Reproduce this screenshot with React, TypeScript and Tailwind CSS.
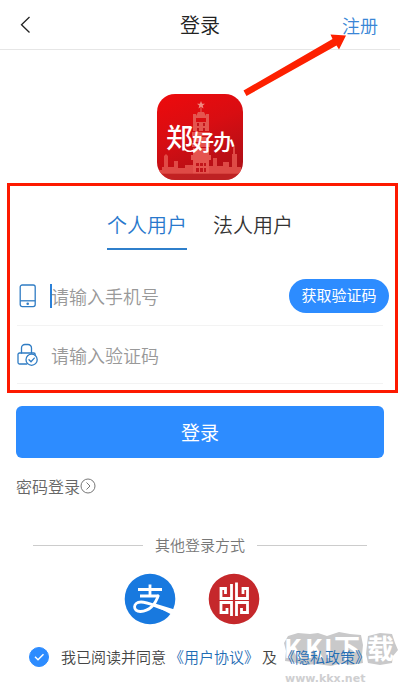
import { useState } from "react"

// ─── Data ─────────────────────────────────────────────────────────────────────

type TabKey = "personal" | "corporate"

const TABS: { key: TabKey; label: string }[] = [
  { key: "personal", label: "个人用户" },
  { key: "corporate", label: "法人用户" },
]

// ─── Icons and logos ──────────────────────────────────────────────────────────

function BackIcon() {
  return (
    <svg className="h-5 w-5" viewBox="0 0 20 20" fill="none" stroke="#222" strokeWidth="1.3">
      <path d="M15.500 2 7.500 9.700 15.500 17.500" />
    </svg>
  )
}

function PhoneIcon() {
  return (
    <svg className="h-6 w-5" viewBox="0 0 20 24" fill="none" stroke="#2f7cc4" strokeWidth="1.300">
      <rect x="3.200" y="1" width="15" height="21.600" rx="2" />
      <path d="M3.200 16.800h15" />
      <circle cx="10.700" cy="19.700" r="1.300" fill="#2f7cc4" stroke="none" />
    </svg>
  )
}

function LockIcon() {
  return (
    <svg className="h-6 w-[22px]" viewBox="0 0 22 24" fill="none" stroke="#2f7cc4" strokeWidth="1.300" strokeLinecap="round">
      <path d="M4.500 10V5a3.500 3.500 0 0 1 3.500-3.500h3A3.500 3.500 0 0 1 14.500 5V10" />
      <path d="M18.200 11.800v-.3a1.500 1.500 0 0 0-1.500-1.500H2.500A1.500 1.500 0 0 0 1 11.500v8A1.500 1.500 0 0 0 2.500 21h7.200" />
      <circle cx="14.600" cy="16.700" r="5.600" />
      <path d="m12 16.700 2 2 3.300-3.600" />
    </svg>
  )
}

function AppLogo() {
  return (
    <svg className="h-[86px] w-[86px]" viewBox="0 0 86 86" role="img" aria-label="郑好办">
      <defs>
        <linearGradient id="logo-bg" x1="0" y1="0" x2="0.400" y2="1">
          <stop offset="0" stopColor="#ee0a0c" />
          <stop offset="0.500" stopColor="#d80d12" />
          <stop offset="1" stopColor="#b30f16" />
        </linearGradient>
        <clipPath id="logo-clip">
          <rect width="86" height="86" rx="18" />
        </clipPath>
      </defs>
      <g clipPath="url(#logo-clip)">
        <rect width="86" height="86" fill="url(#logo-bg)" />
        <g fill="#e5554f">
          <path d="m44 7 1.100 2.700h2.900l-2.300 1.800.8 2.900-2.500-1.700-2.500 1.700.8-2.900L40 9.700h2.900z" fill="#f08a80" />
          <path d="M43.400 13h1.200v5h-1.200zM41 18h6l3 6H38z" />
          <path d="M36 20h3v8h10v-8h3v14H36zM36 33h16v4H36zM35 38h18v4H35zM36 43h16v5H36zM35 49h18v4H35zM36 54h16v7H36zM34 61h20v5H34zM36 66h16v14H36z" />
          <path d="M2 76h3v-3h2V62l2-2 2 2v11h6v-6h4v7h7v-3h8v9H2zM52 72h4v-8h4v8h6v-4h6v5h3V60h1v-6l1-3 1 3v6h2v13h4v7H52z" opacity="0.850" />
        </g>
        <path
          fill="#c2151b"
          d="M40 29h2v3h-2zM46 29h2v3h-2zM40 34h2v3h-2zM46 34h2v3h-2zM39 69h3v3h-3zM43 69h3v3h-3zM47 69h2v3h-2zM39 74h3v4h-3zM43 74h3v4h-3zM47 74h2v4h-2z"
        />
        <rect y="79" width="86" height="7" fill="#c9332f" opacity="0.500" />
        <path d="M27 54c3 5 10 4 15-1" fill="none" stroke="#fff" strokeWidth="1.500" strokeLinecap="round" />
        <g fill="#fff" fontFamily="'Noto Sans CJK SC', sans-serif" fontWeight="500">
          <text x="9" y="54" fontSize="27">郑</text>
          <text x="35" y="56" fontSize="22">好</text>
          <text x="56" y="56" fontSize="22">办</text>
        </g>
      </g>
    </svg>
  )
}

function AlipayLogo() {
  return (
    <svg className="h-[52px] w-[52px]" viewBox="0 0 52 52">
      <circle cx="26" cy="26" r="25.300" fill="#1879df" />
      <g fill="none" stroke="#fff" strokeWidth="2.800">
        <path d="M14 16.500h24M26 11.500v11M16 23h19" />
        <path d="M34.500 22c-3 9-9 16-18 16.500-8 .2-8-9.500.500-9.500 8 0 16 5.500 30 9" />
      </g>
      <path d="M31 30.500 50.500 36.500 47.500 41.500 29 32z" fill="#fff" />
    </svg>
  )
}

function BankLogo() {
  return (
    <svg className="h-[52px] w-[52px]" viewBox="0 0 52 52">
      <circle cx="26" cy="26" r="25.300" fill="#c5282b" />
      <g fill="none" stroke="#fff" strokeWidth="2.800">
        <path d="M23.500 43V29.500H13v10h6V35" />
        <path d="M28.500 43V29.500h11v10h-6V35" />
        <path d="M23.500 11v14.500H13V15.500h4.500v5.500" />
        <path d="M28.500 9.500v16h11v-10H35v5.500" />
      </g>
    </svg>
  )
}

function Watermark() {
  return (
    <svg className="pointer-events-none absolute right-0 bottom-0 h-[64px] w-[120px]" viewBox="0 -8 120 64" aria-hidden="true">
      <g fill="#c9c9ca">
        <path d="m8 6 10-3 12 1 8-1 9 3 12-4 11 2 11 1 2 10-1 10 1 8-12 2-9-2-11 3-14-2-12 1-12-3-8-1 1-10-2-8z" />
        <path d="m88 6 12-3 12 1 3 9 3 7-5 6-1 7-12 2-12-2-2-9 1-9z" />
      </g>
      <g fill="#fff" fontFamily="'Noto Sans CJK SC', sans-serif" fontWeight="700">
        <text x="4" y="28" fontSize="26">K</text>
        <text x="25" y="28" fontSize="26">K</text>
        <text x="44" y="28" fontSize="26">I</text>
        <text x="54" y="28" fontSize="26">下</text>
        <text x="87" y="29" fontSize="27">载</text>
      </g>
      <text x="5" y="52" fontSize="11" fontWeight="700" fontFamily="'DejaVu Sans', sans-serif" fill="#cfcfd1">www.kkx.net</text>
    </svg>
  )
}

// ─── Page ─────────────────────────────────────────────────────────────────────

export default function App() {
  const [tab, setTab] = useState<TabKey>("personal")
  const [agreed, setAgreed] = useState(true)

  return (
    <main className="relative overflow-hidden bg-white pb-4 font-['Noto_Sans_CJK_SC',sans-serif] font-[350] text-[#333]">
      {/* Header */}
      <header className="grid h-[50px] grid-cols-3 items-center border-b border-[#e6e6e6] px-[22px]">
        <button type="button" aria-label="返回" className="-ml-2 justify-self-start">
          <BackIcon />
        </button>
        <h1 className="text-center text-xl text-[#222]">登录</h1>
        <a href="#register" className="justify-self-end text-lg text-[#3a86d6]">
          注册
        </a>
      </header>

      <div className="mt-11 flex justify-center">
        <AppLogo />
      </div>

      <Watermark />

      <form className="relative" onSubmit={(e) => e.preventDefault()}>
        {/* Highlighted credentials area */}
        <section className="mt-[3px] mr-[2px] ml-[7px] border-[3px] border-[#fd1900] pr-[6px] pb-[6px] pl-[7px]">
          <div role="tablist" className="mt-5 mr-[6px] flex justify-center gap-[26px]">
            {TABS.map((t) => (
              <button
                key={t.key}
                type="button"
                role="tab"
                aria-selected={tab === t.key}
                onClick={() => setTab(t.key)}
                className={
                  tab === t.key
                    ? "border-b-2 border-[#2f7fcb] pt-[5px] pb-[9px] text-xl text-[#2878cc]"
                    : "border-b-2 border-transparent pt-[5px] pb-[9px] text-xl text-[#333]"
                }
              >
                {t.label}
              </button>
            ))}
          </div>

          <div className="mt-4 mr-[6px] flex h-[60px] items-center border-b border-[#f3f3f3]">
            <label htmlFor="phone" aria-label="手机号">
              <PhoneIcon />
            </label>
            <span className="ml-[13px] h-6 w-[2px] shrink-0 bg-[#2b80d8]" />
            <input
              id="phone"
              type="tel"
              placeholder="请输入手机号"
              className="-ml-px min-w-0 flex-1 bg-transparent text-lg outline-none placeholder:text-[#999]"
            />
            <button
              type="button"
              className="-mr-[6px] h-[34px] w-[100px] shrink-0 rounded-full bg-[#2d8cff] text-[15px] font-normal text-white"
            >
              获取验证码
            </button>
          </div>

          <div className="mr-[6px] flex h-[58px] items-center border-b border-[#f3f3f3]">
            <label htmlFor="code" aria-label="验证码">
              <LockIcon />
            </label>
            <input
              id="code"
              type="text"
              placeholder="请输入验证码"
              className="ml-3 min-w-0 flex-1 bg-transparent text-lg outline-none placeholder:text-[#999]"
            />
          </div>
        </section>

        <div className="mt-[13px] px-4">
          <button type="submit" className="h-[52px] w-full rounded-md bg-[#2d8cff] text-[19px] font-normal text-white">
            登录
          </button>
          <a href="#password" className="mt-4 flex items-center text-base text-[#666]">
            密码登录
            <svg className="h-4 w-4" viewBox="0 0 16 16" fill="none" stroke="#777" strokeWidth="1">
              <circle cx="8" cy="8" r="7" />
              <path d="m6.500 4.500 3.500 3.500-3.500 3.500" />
            </svg>
          </a>
        </div>

        {/* Other sign-in methods */}
        <div className="mt-9 flex items-center gap-3 px-[33px] text-[15px] text-[#777]">
          <span className="h-px flex-1 bg-[#ccc]" />
          其他登录方式
          <span className="h-px flex-1 bg-[#ccc]" />
        </div>
        <div className="mt-4 flex justify-center gap-8 pr-4">
          <button type="button" aria-label="支付宝登录">
            <AlipayLogo />
          </button>
          <button type="button" aria-label="银行登录">
            <BankLogo />
          </button>
        </div>

        {/* Terms */}
        <div className="mt-[21px] flex items-center gap-[3px] pb-[2px] pl-[29px] text-[15px] whitespace-nowrap text-[#444]">
          <span className="relative mr-[9px] flex h-5 w-5">
            <input
              id="agree"
              type="checkbox"
              checked={agreed}
              onChange={(e) => setAgreed(e.target.checked)}
              className="h-5 w-5 appearance-none rounded-full border border-[#2d8cff] checked:bg-[#2d8cff]"
            />
            {agreed && (
              <svg
                className="pointer-events-none absolute inset-0"
                viewBox="0 0 20 20"
                fill="none"
                stroke="#fff"
                strokeWidth="1.500"
              >
                <path d="m6 9.800 3 3 5.500-5.600" />
              </svg>
            )}
          </span>
          <label htmlFor="agree">我已阅读并同意</label>
          <a href="#terms" className="text-[#1f6db5]">《用户协议》</a>
          <span>及</span>
          <a href="#privacy" className="text-[#1f6db5]">《隐私政策》</a>
        </div>
      </form>

      {/* Arrow pointing at the register link */}
      <svg className="pointer-events-none absolute top-0 right-0 h-[110px] w-[160px]" viewBox="240 0 160 110" aria-hidden="true">
        <path d="M243.500 90.500 332.500 39 330.500 34.500 346 35.500 339 49.500 336.500 45.500 246.500 96z" fill="#fd2000" />
      </svg>
    </main>
  )
}
